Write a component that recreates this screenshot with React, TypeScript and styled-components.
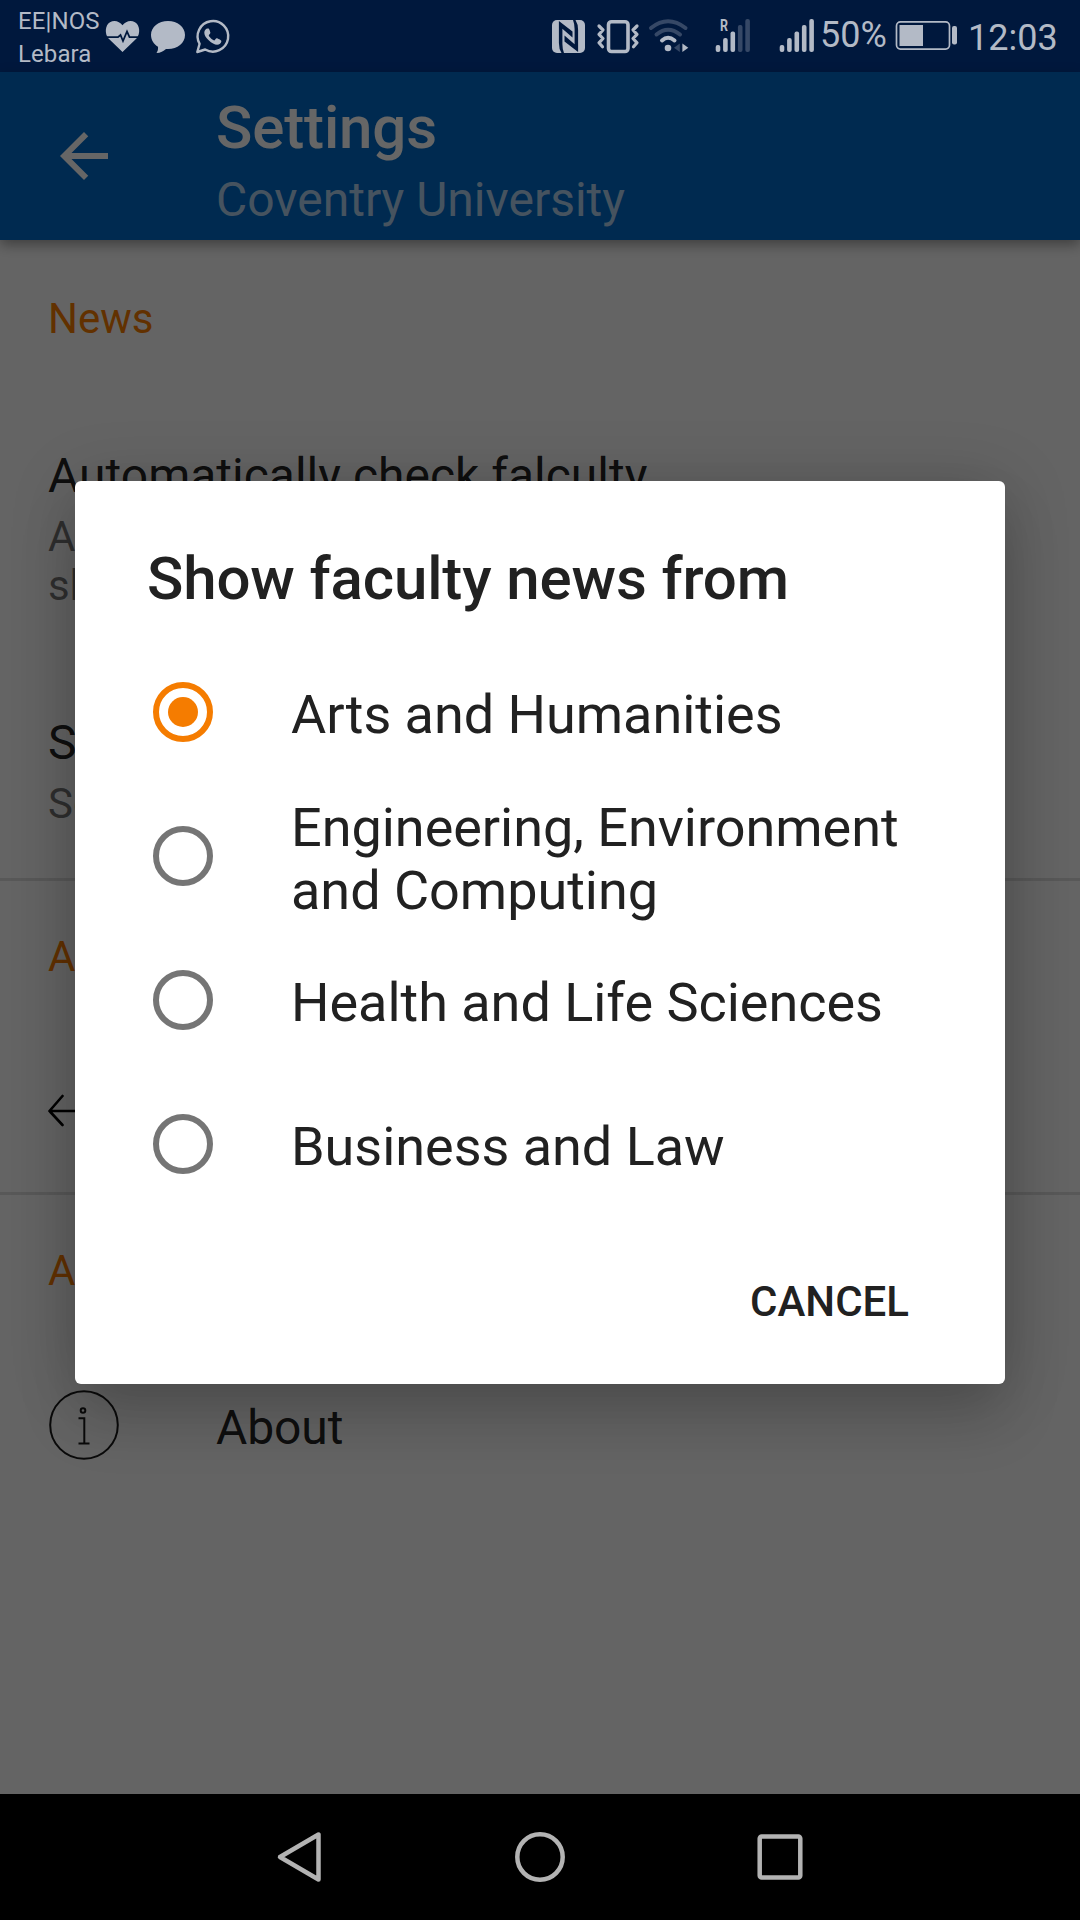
import React, { useState } from "react";
import styled, { createGlobalStyle } from "styled-components";

const GlobalStyle = createGlobalStyle`
  * { box-sizing: border-box; }
  body {
    margin: 0;
    background: #000;
    font-family: Roboto, "Noto Sans", sans-serif;
  }
`;

const TINT = "#b3bac6";

const Screen = styled.div`
  position: relative;
  width: 1080px;
  height: 1920px;
  display: flex;
  flex-direction: column;
  overflow: hidden;
`;

const StatusBar = styled.header`
  flex: none;
  height: 72px;
  display: flex;
  align-items: flex-start;
  background: #00183d;
  color: ${TINT};
`;

const Carriers = styled.div`
  width: 85px;
  margin-left: 18px;
  padding-top: 5px;
  font-size: 24px;
  line-height: 33px;
  letter-spacing: 0.1px;
  white-space: nowrap;
`;

const StatusGap = styled.div`
  flex: 1;
`;

const StatusText = styled.div<{ $top: number; $width: number }>`
  width: ${(p) => p.$width}px;
  padding-top: ${(p) => p.$top}px;
  font-size: 36px;
  line-height: 42px;
  white-space: nowrap;
`;

const StatusGlyph = styled.svg`
  display: block;
  flex: none;
  height: 72px;
`;

const Page = styled.main`
  flex: 1;
  display: flex;
  flex-direction: column;
  background: #fafafa;
`;

const AppBar = styled.div`
  position: relative;
  flex: none;
  height: 168px;
  display: flex;
  background: #0069c8;
  box-shadow: 0 5px 12px rgba(0, 0, 0, 0.36);
`;

const BackButton = styled.div`
  width: 216px;
  padding: 48px 0 0 48px;
  svg {
    display: block;
  }
`;

const AppBarTitles = styled.div`
  padding-top: 21px;
`;

const AppBarTitle = styled.div`
  font-size: 60px;
  line-height: 70px;
  font-weight: 500;
  letter-spacing: -0.13px;
  color: #fff;
`;

const AppBarSubtitle = styled.div`
  margin-top: 9px;
  font-size: 48px;
  line-height: 56px;
  color: rgba(255, 255, 255, 0.7);
`;

const Section = styled.section<{ $first?: boolean; $last?: boolean }>`
  padding-top: ${(p) => (p.$first ? 54 : 51)}px;
  border-bottom: ${(p) => (p.$last ? "none" : "3px solid #dcdcdc")};
`;

const SectionTitle = styled.div`
  margin-bottom: 51px;
  padding-left: 48px;
  font-size: 42px;
  line-height: 50px;
  color: #f57c00;
`;

const Preference = styled.div`
  padding: 53px 48px 51px;
  & + & {
    padding: 54px 48px 50px;
  }
`;

const PreferenceTitle = styled.div`
  font-size: 48px;
  line-height: 56px;
  color: rgba(0, 0, 0, 0.87);
`;

const PreferenceSummary = styled.div`
  margin-top: 8px;
  font-size: 42px;
  line-height: 49px;
  color: rgba(0, 0, 0, 0.54);
`;

const ActionRow = styled.div`
  height: 159px;
  display: flex;
  align-items: center;
  padding: 0 0 3px 48px;
  svg {
    display: block;
  }
`;

const ActionIcon = styled.div`
  width: 168px;
`;

const ActionLabel = styled(PreferenceTitle)`
  padding-top: 5px;
  letter-spacing: -0.1px;
`;

const Overlay = styled.div`
  position: absolute;
  inset: 72px 0 126px;
  display: flex;
  align-items: center;
  justify-content: center;
  padding-bottom: 1px;
  background: rgba(0, 0, 0, 0.6);
`;

const Dialog = styled.div`
  width: 930px;
  height: 903px;
  display: flex;
  flex-direction: column;
  padding-top: 63px;
  border-radius: 6px;
  background: #fff;
  color: #212121;
  box-shadow: 0 36px 60px rgba(0, 0, 0, 0.14), 0 4px 66px rgba(0, 0, 0, 0.18);
`;

const DialogTitle = styled.div`
  margin-bottom: 26px;
  padding-left: 72px;
  font-size: 60px;
  line-height: 70px;
  font-weight: 500;
  letter-spacing: -0.13px;
`;

const Option = styled.div`
  height: 144px;
  display: flex;
  align-items: center;
  padding-left: 78px;
  cursor: pointer;
`;

const Radio = styled.div<{ $on: boolean }>`
  flex: none;
  width: 60px;
  height: 60px;
  display: flex;
  align-items: center;
  justify-content: center;
  margin-right: 78px;
  border: 6px solid ${(p) => (p.$on ? "#f57c00" : "#757575")};
  border-radius: 50%;
`;

const RadioDot = styled.div`
  width: 30px;
  height: 30px;
  border-radius: 50%;
  background: #f57c00;
`;

const OptionLabel = styled.div`
  padding-top: 5px;
  width: 640px;
  font-size: 54px;
  line-height: 63px;
  letter-spacing: -0.03px;
`;

const DialogActions = styled.div`
  display: flex;
  justify-content: flex-end;
  padding: 61px 96px 0 0;
`;

const DialogButton = styled.button`
  padding: 0;
  border: 0;
  background: none;
  color: inherit;
  font: 500 42px/50px Roboto, "Noto Sans", sans-serif;
`;

const NavBar = styled.nav`
  flex: none;
  height: 126px;
  display: flex;
  justify-content: center;
  align-items: center;
  gap: 180px;
  background: #000;
  svg {
    display: block;
  }
`;

const HeartGlyph = () => (
  <StatusGlyph viewBox="103 0 42 72" width="42" fill={TINT}>
    <path d="M122.5 52 108.5 38.5C104.500 34 105 25 110 22.300c4.500-2.500 9.500-.8 12.500 3 3-3.800 8-5.500 12.500-3 5 2.700 5.600 11.700 1.500 16.200Z" />
    <path
      d="M104 37.200h14l2.500-2.200 2.500 6 4-9.500 2.500 5.700h11"
      fill="none"
      stroke="#00183d"
      strokeWidth="1.800"
    />
  </StatusGlyph>
);

const BubbleGlyph = () => (
  <StatusGlyph viewBox="145 0 46 72" width="46" fill={TINT}>
    <path d="M168 21c9.500 0 17 6 17 14s-7.500 14-17 14l-2-.1c-2.500 2.300-5.500 3.800-9.500 4.100 1.200-1.800 1.800-3.500 1.500-6.200-4.200-2.500-7-7-7-11.800 0-8 7.500-14 17-14Z" />
  </StatusGlyph>
);

const WhatsAppGlyph = () => (
  <StatusGlyph viewBox="191 0 42 72" width="42">
    <path
      d="M197.300 52 199.600 43.800A15.300 15.300 0 1 1 205.200 49.500Z"
      fill="none"
      stroke={TINT}
      strokeWidth="2.400"
      strokeLinejoin="round"
    />
    <path
      fill={TINT}
      d="M207.600 28.400c-1.600 0-3.300 1.800-3.300 4.300 0 2.700 2 5.200 4.400 7.600 3 3 5.900 4.400 8.400 4.400 2.200 0 4.200-1.600 4.300-3.800.1-.7-4-2.700-4.800-2.700-.7 0-1.600 2.200-2.300 2.200-1.300 0-5.500-3.900-5.500-5 0-.7 1.600-1.700 1.600-2.600 0-.6-1.200-4.100-1.800-4.400Z"
    />
  </StatusGlyph>
);

const NfcGlyph = () => (
  <StatusGlyph viewBox="548 0 42 72" width="42">
    <rect x="552" y="20" width="33" height="33" rx="5" fill={TINT} />
    <g fill="#00183d">
      <path d="M558.900 21 572.500 31.500V37.500L562.400 28.800V44Q562.400 49 564 53H561.500Q558.900 49 558.900 43Z" />
      <path d="M578.100 52 564.500 41.500V35.500L574.600 44.200V29Q574.600 24 573 20H575.500Q578.100 24 578.100 30Z" />
    </g>
  </StatusGlyph>
);

const VibrateGlyph = () => (
  <StatusGlyph viewBox="590 0 55 72" width="55" fill="none" stroke={TINT}>
    <rect x="608.500" y="21.700" width="19.500" height="29.800" rx="3" strokeWidth="3.600" />
    <path
      d="M599 26l4 4-4 4.300 4 4.200-4 4.300 3.500 4M637 26l-4 4 4 4.300-4 4.200 4 4.300-3.500 4"
      strokeWidth="3.200"
      strokeLinecap="round"
      strokeLinejoin="round"
    />
  </StatusGlyph>
);

const WifiGlyph = () => (
  <StatusGlyph viewBox="645 0 60 72" width="60" fill="none" stroke={TINT} strokeWidth="4" strokeLinecap="round">
    <path d="M651 28Q668 14.500 685.500 28" opacity=".3" />
    <path d="M656.500 34.500Q668 25 680 34.500" opacity=".3" />
    <path d="M662 40.500Q668 35 674.500 40.500" />
    <circle cx="668" cy="48" r="3.300" fill={TINT} stroke="none" />
    <path d="M679.800 43.500V52L674 47.800Z" fill={TINT} stroke="none" opacity=".3" />
    <path d="M682.400 43.500V52L688.300 47.800Z" fill={TINT} stroke="none" />
  </StatusGlyph>
);

const RoamLabel = styled.text`
  font: 700 16px Roboto, sans-serif;
`;

const SignalBars = ({ x, level }: { x: number; level: number }) => (
  <g fill={TINT}>
    {[7, 14, 20.5, 27, 33].map((h, i) => (
      <rect
        key={h}
        x={x + i * 7.4}
        y={52 - h}
        width="4.600"
        height={h}
        rx="2"
        opacity={i < level ? 1 : 0.3}
      />
    ))}
  </g>
);

const BatteryGlyph = () => (
  <StatusGlyph viewBox="890 0 78 72" width="78">
    <rect x="896.500" y="21.900" width="53" height="27.200" rx="4" fill="none" stroke={TINT} strokeWidth="1.700" />
    <rect x="899.500" y="25" width="23.500" height="21" fill={TINT} />
    <rect x="952" y="26" width="5" height="18.500" rx="2" fill={TINT} />
  </StatusGlyph>
);

const FACULTIES = [
  "Arts and Humanities",
  "Engineering, Environment and Computing",
  "Health and Life Sciences",
  "Business and Law",
];

export default function App() {
  const [selected, setSelected] = useState(0);
  return (
    <>
      <GlobalStyle />
      <Screen>
        <StatusBar>
          <Carriers>
            <div>EE|NOS</div>
            <div>Lebara</div>
          </Carriers>
          <HeartGlyph />
          <BubbleGlyph />
          <WhatsAppGlyph />
          <StatusGap />
          <NfcGlyph />
          <VibrateGlyph />
          <WifiGlyph />
          <StatusGlyph viewBox="705 0 60 72" width="60">
            <RoamLabel x="720" y="30.800" fill={TINT} textLength="8" lengthAdjust="spacingAndGlyphs">
              R
            </RoamLabel>
            <SignalBars x={715.7} level={3} />
          </StatusGlyph>
          <StatusGlyph viewBox="765 0 55 72" width="55">
            <SignalBars x={779.7} level={5} />
          </StatusGlyph>
          <StatusText $top={14} $width={70}>50%</StatusText>
          <BatteryGlyph />
          <StatusText $top={17} $width={112}>12:03</StatusText>
        </StatusBar>

        <Page>
          <AppBar>
            <BackButton>
              <svg width="72" height="72" viewBox="0 0 24 24" fill="#fff">
                <path d="M20 11H7.830l5.590-5.590L12 4l-8 8 8 8 1.410-1.410L7.830 13H20v-2z" />
              </svg>
            </BackButton>
            <AppBarTitles>
              <AppBarTitle>Settings</AppBarTitle>
              <AppBarSubtitle>Coventry University</AppBarSubtitle>
            </AppBarTitles>
          </AppBar>

          <Section $first>
            <SectionTitle>News</SectionTitle>
            <Preference>
              <PreferenceTitle>Automatically check falculty</PreferenceTitle>
              <PreferenceSummary>
                A<br />
                sh
              </PreferenceSummary>
            </Preference>
            <Preference>
              <PreferenceTitle>S</PreferenceTitle>
              <PreferenceSummary>Se</PreferenceSummary>
            </Preference>
          </Section>

          <Section>
            <SectionTitle>A</SectionTitle>
            <ActionRow>
              <svg
                width="72"
                height="72"
                viewBox="0 0 72 72"
                fill="none"
                stroke="#000"
                strokeWidth="2.600"
                strokeLinecap="round"
                strokeLinejoin="round"
              >
                <path d="M14.500 21 1.500 36 14.500 50M1.500 36H70" />
              </svg>
            </ActionRow>
          </Section>

          <Section $last>
            <SectionTitle>A</SectionTitle>
            <ActionRow>
              <ActionIcon>
                <svg width="72" height="72" viewBox="0 0 72 72" fill="none" stroke="#1a1a1a" strokeWidth="2">
                  <circle cx="36" cy="36" r="33.800" />
                  <circle cx="35" cy="21.500" r="2.300" />
                  <path d="M30.500 29.300H36.300V54.500M30.500 54.500H41.500" />
                </svg>
              </ActionIcon>
              <ActionLabel>About</ActionLabel>
            </ActionRow>
          </Section>
        </Page>

        <NavBar>
          <svg width="60" height="60" viewBox="0 0 60 60" fill="none" stroke="#b3b3b3" strokeWidth="4.500" strokeLinejoin="round">
            <path d="M48.500 7.500V52.500L10 30Z" />
          </svg>
          <svg width="60" height="60" viewBox="0 0 60 60" fill="none" stroke="#b3b3b3" strokeWidth="4.500">
            <circle cx="30" cy="30" r="22.700" />
          </svg>
          <svg width="60" height="60" viewBox="0 0 60 60" fill="none" stroke="#b3b3b3" strokeWidth="4.500">
            <rect x="9.700" y="9.500" width="40.600" height="41" rx="2" />
          </svg>
        </NavBar>

        <Overlay>
          <Dialog>
            <DialogTitle>Show faculty news from</DialogTitle>
            {FACULTIES.map((name, i) => (
              <Option key={name} onClick={() => setSelected(i)}>
                <Radio $on={i === selected}>{i === selected && <RadioDot />}</Radio>
                <OptionLabel>{name}</OptionLabel>
              </Option>
            ))}
            <DialogActions>
              <DialogButton>CANCEL</DialogButton>
            </DialogActions>
          </Dialog>
        </Overlay>
      </Screen>
    </>
  );
}
